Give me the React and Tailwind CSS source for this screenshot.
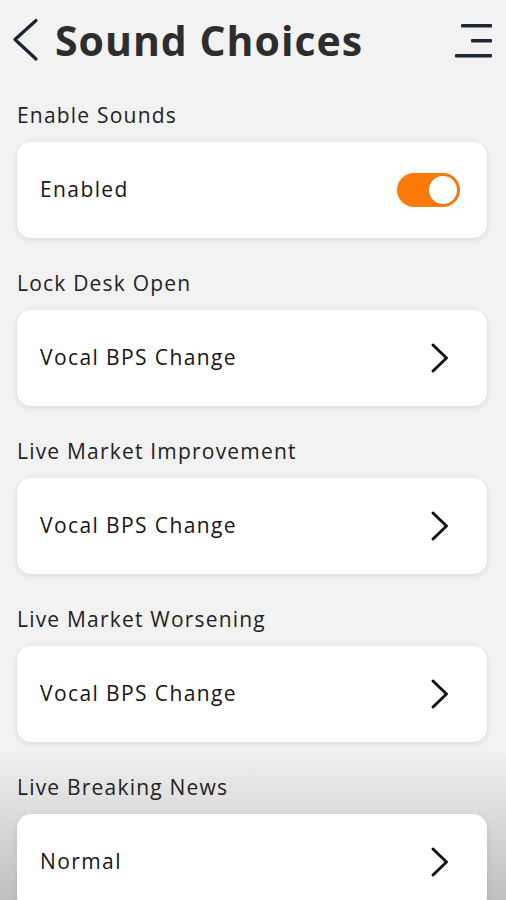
import React from "react";

const font = { fontFamily: '"Open Sans", "Noto Sans", sans-serif' };

function Chevron() {
  return (
    <svg width="20" height="32" viewBox="0 0 20 32" fill="none" className="shrink-0">
      <path d="M3 3 L16.5 16 L3 29" stroke="#111" strokeWidth="3" strokeLinecap="round" strokeLinejoin="round" />
    </svg>
  );
}

function Toggle() {
  return (
    <div className="w-[63px] h-[34px] rounded-full bg-[#fb7a0a] flex items-center justify-end pr-[1px]">
      <div className="w-[32px] h-[32px] rounded-full bg-white border-2 border-[#f07812]" />
    </div>
  );
}

function Section({ label, toggle, children }) {
  return (
    <div className="flex flex-col">
      <div className="h-[28px] flex items-center text-[21px] font-medium text-[#222222] tracking-[1.2px]">{label}</div>
      <div
        className={
          "mt-[12px] h-[96px] rounded-[14px] bg-white shadow-[0_2px_6px_rgba(0,0,0,0.10)] flex items-center justify-between pl-[23px] mb-[32px] " +
          (toggle ? "pr-[27px]" : "pr-[37px]")
        }
      >
        {children}
      </div>
    </div>
  );
}

function Value({ children }) {
  return <span className="text-[21px] text-[#161616] tracking-[1.4px]">{children}</span>;
}

export default function App() {
  return (
    <div
      style={font}
      className="relative w-[506px] h-[900px] overflow-hidden bg-linear-to-b from-[#f2f2f2] from-[83%] to-[#bfbfbf]"
    >
      <div className="h-[80px] flex items-center justify-between pl-[11px] pr-[13px]">
        <div className="flex items-center gap-[16px]">
          <svg width="28" height="44" viewBox="0 0 28 44" fill="none">
            <path d="M25 2.5 L4 21.5 L25 41" stroke="#1b2231" strokeWidth="3.2" strokeLinecap="round" strokeLinejoin="round" />
          </svg>
          <h1 className="text-[41px] font-bold text-[#2d2d2d] leading-none tracking-[1px]">Sound Choices</h1>
        </div>
        <svg width="38" height="36" viewBox="0 0 38 36" fill="none">
          <rect x="6" y="2" width="31" height="3.4" rx="1" fill="#1e2634" />
          <rect x="16" y="17" width="21" height="3.4" rx="1" fill="#1e2634" />
          <rect x="0" y="32" width="37" height="3.4" rx="1" fill="#1e2634" />
        </svg>
      </div>
      <div className="pl-[17px] pr-[19px] pt-[22px]">
        <Section label="Enable Sounds" toggle>
          <Value>Enabled</Value>
          <Toggle />
        </Section>
        <Section label="Lock Desk Open">
          <Value>Vocal BPS Change</Value>
          <Chevron />
        </Section>
        <Section label="Live Market Improvement">
          <Value>Vocal BPS Change</Value>
          <Chevron />
        </Section>
        <Section label="Live Market Worsening">
          <Value>Vocal BPS Change</Value>
          <Chevron />
        </Section>
        <Section label="Live Breaking News">
          <Value>Normal</Value>
          <Chevron />
        </Section>
      </div>
    </div>
  );
}
